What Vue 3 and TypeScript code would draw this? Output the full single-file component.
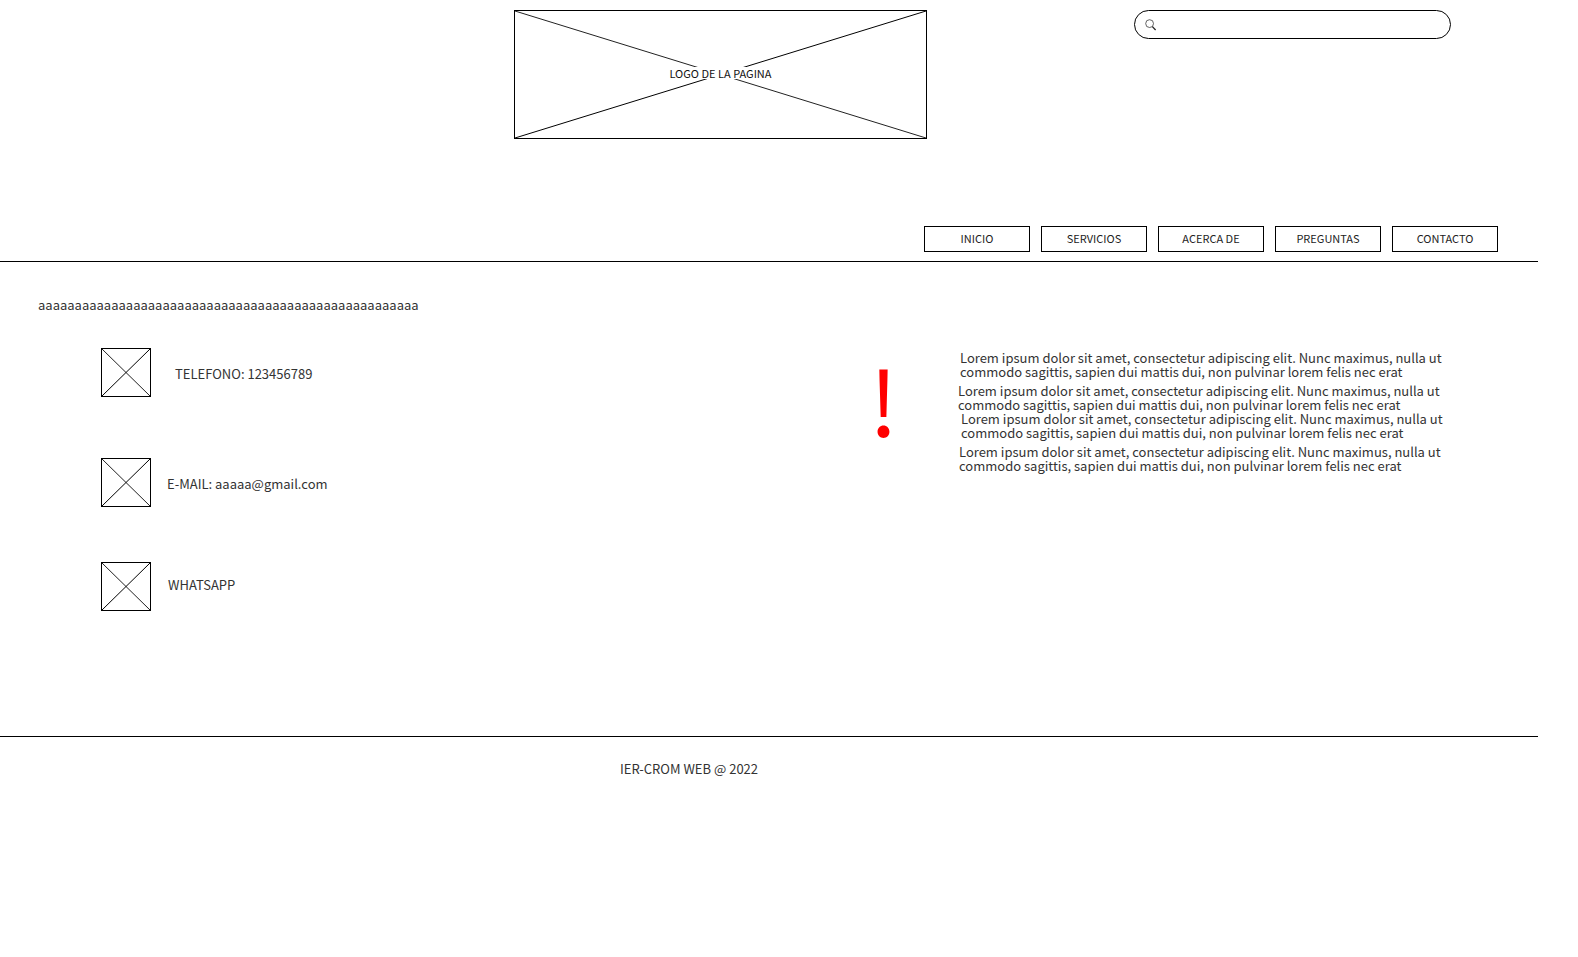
<script setup lang="ts">
interface Contact {
  id: string
  label: string
}

const menu: string[] = ['INICIO', 'SERVICIOS', 'ACERCA DE', 'PREGUNTAS', 'CONTACTO']

const contacts: Contact[] = [
  { id: 'phone', label: 'TELEFONO: 123456789' },
  { id: 'mail', label: 'E-MAIL: aaaaa@gmail.com' },
  { id: 'whatsapp', label: 'WHATSAPP' },
]

const lorem =
  'Lorem ipsum dolor sit amet, consectetur adipiscing elit. Nunc maximus, nulla ut commodo sagittis, sapien dui mattis dui, non pulvinar lorem felis nec erat'
const notices: string[] = ['first', 'second', 'third', 'fourth']
const heading = 'a'.repeat(52)
</script>

<template>
  <div class="page">
    <header class="header">
      <div class="top">
        <div class="logo">
          <svg class="cross" viewBox="0 0 100 100" preserveAspectRatio="none" aria-hidden="true">
            <line class="down" x1="0" y1="0" x2="100" y2="100" />
            <line class="up" x1="0" y1="100" x2="100" y2="0" />
          </svg>
          <span class="logo-label">LOGO DE LA PAGINA</span>
        </div>
        <label class="search">
          <svg class="lens" viewBox="0 0 12 12" aria-hidden="true">
            <circle cx="4.6" cy="4.6" r="3.9" />
            <path d="M7.4 7.6 L10.6 11" />
          </svg>
          <input type="search" aria-label="Buscar" />
        </label>
      </div>
      <nav class="nav">
        <button v-for="item in menu" :key="item" type="button">{{ item }}</button>
      </nav>
    </header>

    <main class="main">
      <section>
        <h1 class="heading">{{ heading }}</h1>
        <ul class="contacts">
          <li v-for="c in contacts" :key="c.id" :class="['contact', c.id]">
            <span class="thumb">
              <svg class="cross" viewBox="0 0 100 100" preserveAspectRatio="none" aria-hidden="true">
                <line class="down" x1="0" y1="0" x2="100" y2="100" />
                <line class="up" x1="0" y1="100" x2="100" y2="0" />
              </svg>
            </span>
            <span class="contact-label">{{ c.label }}</span>
          </li>
        </ul>
      </section>
      <div class="mark">!</div>
      <section class="notices">
        <p v-for="n in notices" :key="n" :class="n">{{ lorem }}</p>
      </section>
    </main>

    <footer class="footer">IER-CROM WEB @ 2022</footer>
  </div>
</template>

<style>
body {
  background: #fff;
}
</style>

<style scoped>
.page {
  margin-right: 40px;
  font-family: "Noto Sans CJK SC", "Noto Sans", sans-serif;
  font-size: 13px;
  line-height: 14px;
  color: #333;
}
.header {
  padding-top: 10px;
  border-bottom: 1px solid #000;
}
.top {
  display: grid;
  grid-template-columns: 514fr 413fr 207fr 317fr 87fr;
  align-items: start;
}
.logo {
  grid-column: 2;
  display: grid;
  place-items: center;
  box-sizing: border-box;
  height: 129px;
  border: 1px solid #000;
}
.cross {
  grid-area: 1 / 1;
  display: block;
  width: 100%;
  height: 100%;
  min-height: 0;
}
.cross line {
  stroke-width: 1px;
  vector-effect: non-scaling-stroke;
}
.down {
  stroke: #222;
}
.up {
  stroke: #000;
}
.logo-label {
  grid-area: 1 / 1;
  z-index: 1;
  margin-bottom: 3px;
  background: #fff;
  color: #111;
  font-size: 11px;
  line-height: 12px;
}
.search {
  grid-column: 4;
  display: flex;
  align-items: center;
  gap: 8px;
  box-sizing: border-box;
  height: 29px;
  padding: 0 12px 0 10px;
  border: 1px solid #000;
  border-radius: 15px;
}
.search input {
  flex: 1;
  min-width: 0;
  border: 0;
  outline: 0;
  padding: 0;
  background: transparent;
  font: inherit;
}
.lens {
  width: 12px;
  height: 12px;
  fill: none;
  stroke: #222;
}
.lens circle {
  stroke-width: 0.7;
}
.lens path {
  stroke-width: 1.3;
}
.nav {
  display: flex;
  justify-content: flex-end;
  gap: 11px;
  padding: 87px 40px 9px 0;
}
.nav button {
  width: 106px;
  height: 26px;
  padding: 0 0 2px;
  border: 1px solid #000;
  background: #fff;
  color: #222;
  font-family: inherit;
  font-size: 11px;
  line-height: 12px;
}
.main {
  display: grid;
  grid-template-columns: 869fr 89fr 580fr;
  align-items: start;
  padding-bottom: 125px;
  border-bottom: 1px solid #000;
}
.heading {
  margin: 36px 0 36px 38px;
  font-size: 13px;
  font-weight: 400;
}
.contacts {
  margin: 0;
  padding: 0 0 0 101px;
  list-style: none;
}
.contact {
  display: flex;
  align-items: center;
  gap: 16px;
  margin-bottom: 61px;
}
.contact-label {
  padding-top: 2px;
}
.mail {
  margin-bottom: 55px;
}
.whatsapp {
  gap: 17px;
  margin-bottom: 0;
}
.whatsapp .contact-label {
  padding: 0 0 3px;
}
.phone {
  gap: 24px;
}
.thumb {
  display: grid;
  box-sizing: border-box;
  width: 50px;
  height: 49px;
  border: 1px solid #000;
}
.mark {
  margin-top: 91px;
  color: #f00;
  font-size: 90px;
  line-height: 90px;
}
.notices {
  padding-top: 89px;
}
.notices p {
  max-width: 490px;
  margin: 0;
}
.notices .first {
  margin: 0 0 5px 2px;
}
.notices .third {
  margin: 0 0 5px 3px;
}
.notices .fourth {
  margin-left: 1px;
}
.footer {
  padding: 25px 0 0 620px;
}
</style>
